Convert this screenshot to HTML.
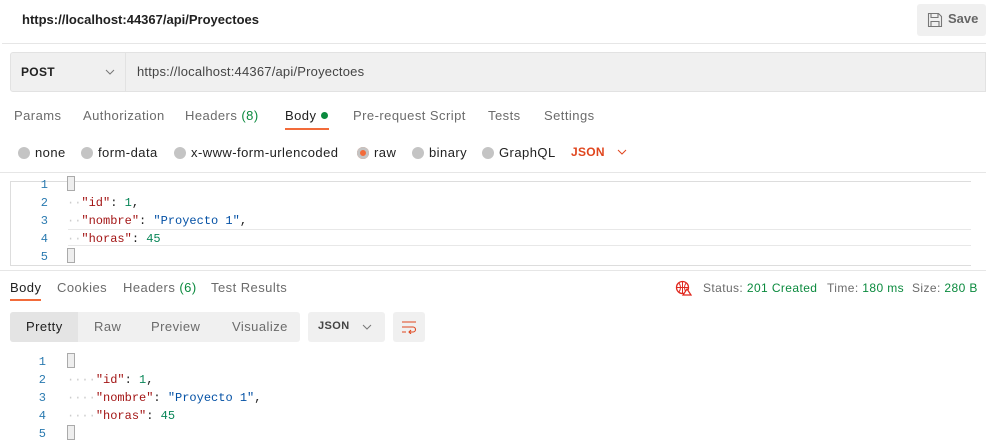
<!DOCTYPE html>
<html><head><meta charset="utf-8"><style>
*{margin:0;padding:0;box-sizing:border-box}
body{width:986px;height:443px;background:#fff;font-family:"Liberation Sans",sans-serif;font-size:12px;color:#212121;position:relative;overflow:hidden}
.a{position:absolute;white-space:nowrap}
.t{font-size:13px;letter-spacing:0.45px}
.g{color:#6b6b6b}
.mono{font-family:"Liberation Mono",monospace;font-size:12px}
.dot{display:inline-block;width:12px;height:12px;border-radius:50%;background:#c4c4c4;vertical-align:-2px;margin-right:5px}
.k{color:#a31515}.s{color:#0451a5}.n{color:#098658}.ln{color:#2a7ab0}.ws{color:#ccc}
.br{display:inline-block;border:1px solid #aaa;background:#eee;width:8px;height:15px;vertical-align:-3px}
</style></head><body>
<div class="a" style="left:22px;top:12px;font-weight:bold;font-size:13px">https://localhost:44367/api/Proyectoes</div>
<div class="a" style="left:917px;top:4px;width:69px;height:32px;background:#f0f0f0;border-radius:3px"></div>
<svg class="a" style="left:927px;top:12px" width="16" height="16" viewBox="0 0 16 16"><path d="M1.5 1.5h10l3 3v10h-13z M4 1.5v4h7v-4 M4 14.5v-5h8v5" fill="none" stroke="#777" stroke-width="1.1"/></svg>
<div class="a" style="left:948px;top:11px;color:#666;font-weight:bold;font-size:13px">Save</div>
<div class="a" style="left:2px;top:43px;width:984px;height:1px;background:#e6e6e6"></div>
<div class="a" style="left:10px;top:52px;width:976px;height:40px;background:#f0f0f0;border:1px solid #e2e2e2;border-radius:3px 0 0 3px"></div>
<div class="a" style="left:125px;top:53px;width:1px;height:38px;background:#e2e2e2"></div>
<div class="a" style="left:21px;top:65px;font-weight:bold;font-size:12px;letter-spacing:0.3px">POST</div>
<svg class="a" style="left:104px;top:68px" width="12" height="8"><path d="M2 2l4 4 4-4" fill="none" stroke="#777" stroke-width="1"/></svg>
<div class="a" style="left:137px;top:64px;color:#444;font-size:13px;letter-spacing:0.2px">https://localhost:44367/api/Proyectoes</div>
<div class="a g t" style="left:14px;top:108px">Params</div>
<div class="a g t" style="left:83px;top:108px">Authorization</div>
<div class="a g t" style="left:185px;top:108px">Headers <span style="color:#0b8a3e">(8)</span></div>
<div class="a t" style="left:285px;top:108px">Body <span style="display:inline-block;width:7px;height:7px;border-radius:50%;background:#0b8a3e;vertical-align:1px"></span></div>
<div class="a" style="left:285px;top:128px;width:44px;height:2px;background:#f26b3a"></div>
<div class="a g t" style="left:353px;top:108px">Pre-request Script</div>
<div class="a g t" style="left:488px;top:108px">Tests</div>
<div class="a g t" style="left:544px;top:108px">Settings</div>
<div class="a t" style="left:18px;top:145px"><span class="dot"></span>none</div>
<div class="a t" style="left:81px;top:145px"><span class="dot"></span>form-data</div>
<div class="a t" style="left:174px;top:145px"><span class="dot"></span>x-www-form-urlencoded</div>
<div class="a t" style="left:357px;top:145px"><span class="dot" style="background:#f26b3a;box-shadow:inset 0 0 0 3px #c4c4c4"></span>raw</div>
<div class="a t" style="left:412px;top:145px"><span class="dot"></span>binary</div>
<div class="a t" style="left:482px;top:145px"><span class="dot"></span>GraphQL</div>
<div class="a" style="left:571px;top:145px;font-size:12px;font-weight:bold;color:#e0461e;letter-spacing:0.3px">JSON</div>
<svg class="a" style="left:616px;top:148px" width="12" height="8"><path d="M2 2l4 4 4-4" fill="none" stroke="#e0461e" stroke-width="1"/></svg>
<div class="a" style="left:0;top:172px;width:986px;height:1px;background:#e6e6e6"></div>
<div class="a" style="left:10px;top:181px;width:961px;height:85px;border:1px solid #ddd;border-right:none"></div>
<div class="a" style="left:68px;top:229px;width:903px;height:17px;border-top:1px solid #e8e8e8;border-bottom:1px solid #e8e8e8"></div>
<div class="a mono" style="left:30px;top:176px;line-height:18px;text-align:right;width:18px"><div class="ln">1</div><div class="ln">2</div><div class="ln">3</div><div class="ln">4</div><div class="ln">5</div></div>
<div class="a mono" style="left:67px;top:176px;line-height:18px">
<div><span class="br"></span></div>
<div><span class="ws">··</span><span class="k">"id"</span>: <span class="n">1</span>,</div>
<div><span class="ws">··</span><span class="k">"nombre"</span>: <span class="s">"Proyecto 1"</span>,</div>
<div><span class="ws">··</span><span class="k">"horas"</span>: <span class="n">45</span></div>
<div><span class="br"></span></div></div>
<div class="a" style="left:0;top:270px;width:986px;height:1px;background:#e6e6e6"></div>
<div class="a t" style="left:10px;top:280px">Body</div>
<div class="a" style="left:10px;top:299px;width:31px;height:2px;background:#f26b3a"></div>
<div class="a g t" style="left:57px;top:280px">Cookies</div>
<div class="a g t" style="left:123px;top:280px">Headers <span style="color:#0b8a3e">(6)</span></div>
<div class="a g t" style="left:211px;top:280px">Test Results</div>
<svg class="a" style="left:675px;top:280px" width="17" height="16" viewBox="0 0 17 16"><circle cx="7.5" cy="7.5" r="6" fill="none" stroke="#e0281e" stroke-width="1.3"/><path d="M1.5 7.5h12M7.5 1.5v12M4 3c2 3 2 6 0 9M11 3c-2 3-2 6 0 9" fill="none" stroke="#e0281e" stroke-width="1"/><path d="M12 9l4 6h-8z" fill="#fff" stroke="#e0281e" stroke-width="1.2"/></svg>
<div class="a g" style="left:703px;top:281px;letter-spacing:0.4px">Status: <span style="color:#0b8a3e">201 Created</span></div>
<div class="a g" style="left:827px;top:281px;letter-spacing:0.4px">Time: <span style="color:#0b8a3e">180 ms</span></div>
<div class="a g" style="left:912px;top:281px;letter-spacing:0.4px">Size: <span style="color:#0b8a3e">280 B</span></div>
<div class="a" style="left:10px;top:312px;width:290px;height:30px;background:#f0f0f0;border-radius:3px"></div>
<div class="a" style="left:10px;top:312px;width:68px;height:30px;background:#e4e4e4;border-radius:3px 0 0 3px"></div>
<div class="a t" style="left:26px;top:319px">Pretty</div>
<div class="a g t" style="left:94px;top:319px">Raw</div>
<div class="a g t" style="left:151px;top:319px">Preview</div>
<div class="a g t" style="left:232px;top:319px">Visualize</div>
<div class="a" style="left:308px;top:312px;width:77px;height:30px;background:#f0f0f0;border-radius:3px"></div>
<div class="a" style="left:318px;top:320px;font-size:11px;font-weight:bold;color:#444;letter-spacing:0.4px">JSON</div>
<svg class="a" style="left:361px;top:323px" width="12" height="8"><path d="M2 2l4 4 4-4" fill="none" stroke="#777" stroke-width="1"/></svg>
<div class="a" style="left:393px;top:312px;width:32px;height:30px;background:#f0f0f0;border-radius:3px"></div>
<svg class="a" style="left:401px;top:320px" width="16" height="14"><path d="M1 2h14M1 7h11a2.5 2.5 0 0 1 0 5H8M10 10l-2 2 2 2M1 12h4" fill="none" stroke="#e0461e" stroke-width="1.1"/></svg>
<div class="a mono" style="left:30px;top:353px;line-height:18px;text-align:right;width:16px"><div class="ln">1</div><div class="ln">2</div><div class="ln">3</div><div class="ln">4</div><div class="ln">5</div></div>
<div class="a mono" style="left:67px;top:353px;line-height:18px">
<div><span class="br"></span></div>
<div><span class="ws">····</span><span class="k">"id"</span>: <span class="n">1</span>,</div>
<div><span class="ws">····</span><span class="k">"nombre"</span>: <span class="s">"Proyecto 1"</span>,</div>
<div><span class="ws">····</span><span class="k">"horas"</span>: <span class="n">45</span></div>
<div><span class="br"></span></div></div>
</body></html>
